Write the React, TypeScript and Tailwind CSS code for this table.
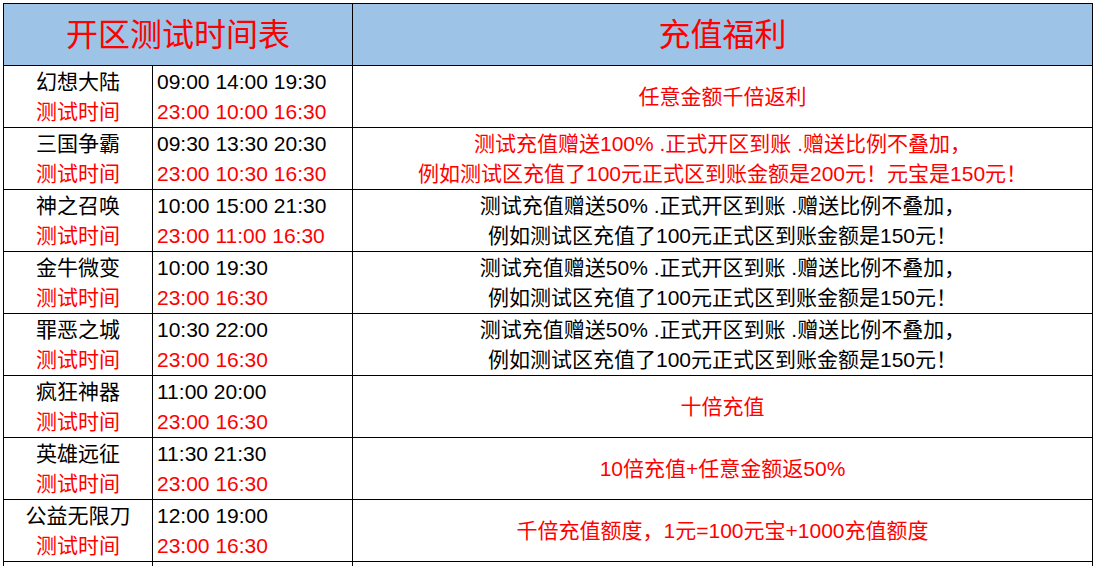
import React from "react";

type Row = {
  name: string;
  t1: string;
  t2: string;
  lines: string[];
  red: boolean;
};

const black1 = "测试充值赠送50% .正式开区到账 .赠送比例不叠加，";
const black2 = "例如测试区充值了100元正式区到账金额是150元！";

const rows: Row[] = [
  { name: "幻想大陆", t1: "09:00 14:00 19:30", t2: "23:00 10:00 16:30", lines: ["任意金额千倍返利"], red: true },
  {
    name: "三国争霸",
    t1: "09:30 13:30 20:30",
    t2: "23:00 10:30 16:30",
    lines: ["测试充值赠送100% .正式开区到账 .赠送比例不叠加，", "例如测试区充值了100元正式区到账金额是200元！元宝是150元！"],
    red: true,
  },
  { name: "神之召唤", t1: "10:00 15:00 21:30", t2: "23:00 11:00 16:30", lines: [black1, black2], red: false },
  { name: "金牛微变", t1: "10:00 19:30", t2: "23:00 16:30", lines: [black1, black2], red: false },
  { name: "罪恶之城", t1: "10:30 22:00", t2: "23:00 16:30", lines: [black1, black2], red: false },
  { name: "疯狂神器", t1: "11:00 20:00", t2: "23:00 16:30", lines: ["十倍充值"], red: true },
  { name: "英雄远征", t1: "11:30 21:30", t2: "23:00 16:30", lines: ["10倍充值+任意金额返50%"], red: true },
  { name: "公益无限刀", t1: "12:00 19:00", t2: "23:00 16:30", lines: ["千倍充值额度，1元=100元宝+1000充值额度"], red: true },
];

export default function App() {
  return (
    <div
      className="w-[1095px] h-[566px] overflow-hidden bg-white pt-[3px] pl-[3px]"
      style={{ fontFamily: '"Liberation Sans", "Noto Sans CJK SC", sans-serif' }}
    >
      <table className="border-collapse table-fixed w-[1089px]">
        <colgroup>
          <col className="w-[149px]" />
          <col className="w-[200px]" />
          <col className="w-[740px]" />
        </colgroup>
        <thead>
          <tr className="h-[62px] bg-[#9dc3e6]">
            <th colSpan={2} className="border border-black text-[32px] font-normal text-[#ff0000] text-center leading-[40px] p-0">
              开区测试时间表
            </th>
            <th className="border border-black text-[32px] font-normal text-[#ff0000] text-center leading-[40px] p-0">
              充值福利
            </th>
          </tr>
        </thead>
        <tbody>
          {rows.map((r) => (
            <tr key={r.name} className="h-[62px]">
              <td className="border border-black text-center text-[21px] leading-[30px] p-0">
                <div className="text-black">{r.name}</div>
                <div className="text-[#ff0000]">测试时间</div>
              </td>
              <td className="border border-black text-left text-[21px] leading-[30px] py-0 pl-[4px] pr-0 whitespace-nowrap">
                <div className="text-black">{r.t1}</div>
                <div className="text-[#ff0000]">{r.t2}</div>
              </td>
              <td
                className={
                  r.red
                    ? "border border-black text-center text-[21px] leading-[30px] p-0 text-[#ff0000] whitespace-nowrap"
                    : "border border-black text-center text-[21px] leading-[30px] p-0 text-black whitespace-nowrap"
                }
              >
                {r.lines.map((l, i) => (
                  <div key={i}>{l}</div>
                ))}
              </td>
            </tr>
          ))}
          <tr className="h-[62px]">
            <td className="border border-black p-0"></td>
            <td className="border border-black p-0"></td>
            <td className="border border-black p-0"></td>
          </tr>
        </tbody>
      </table>
    </div>
  );
}
